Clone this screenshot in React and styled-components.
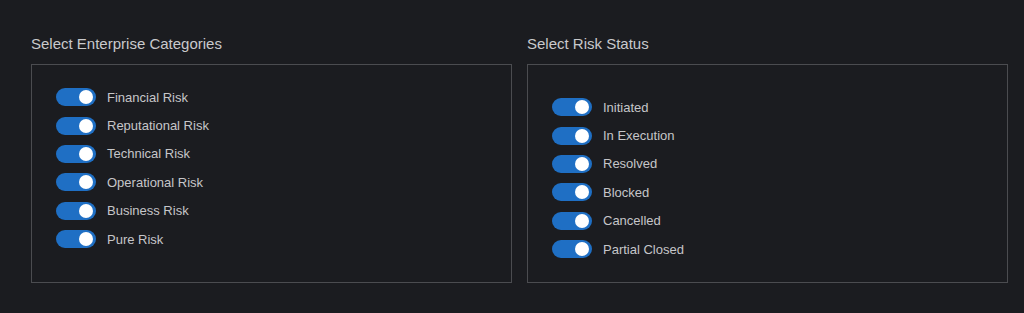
import { useState } from "react";
import styled, { createGlobalStyle } from "styled-components";

const GlobalStyle = createGlobalStyle`
  html, body {
    margin: 0;
    padding: 0;
    background: #1b1c20;
  }
  body {
    font-family: "Liberation Sans", Arial, sans-serif;
  }
`;

const Page = styled.div`
  display: grid;
  grid-template-columns: 481px 481px;
  column-gap: 15px;
  padding: 35px 0 0 31px;
  height: 313px;
  box-sizing: border-box;
`;

const Section = styled.section`
  display: flex;
  flex-direction: column;
`;

const Title = styled.h3`
  margin: 0 0 11px 0;
  font-size: 15px;
  font-weight: 400;
  line-height: 18px;
  color: #c9c9cc;
`;

const Box = styled.div`
  height: 219px;
  box-sizing: border-box;
  border: 1px solid #4b4c50;
  padding: ${({ $top }) => $top}px 0 0 24px;
  display: flex;
  flex-direction: column;
`;

const Row = styled.label`
  display: flex;
  align-items: center;
  gap: 11px;
  height: 28.4px;
  font-size: 13px;
  color: #c6c6c9;
  cursor: pointer;
`;

const Track = styled.span`
  position: relative;
  width: 40px;
  height: 18px;
  border-radius: 9px;
  background: ${({ $on }) => ($on ? "#1f6fc4" : "#55575c")};
  flex-shrink: 0;
  transition: background 0.2s linear;
`;

const Knob = styled.span`
  position: absolute;
  top: 2px;
  left: ${({ $on }) => ($on ? "23px" : "2px")};
  width: 14px;
  height: 14px;
  border-radius: 50%;
  background: #ffffff;
  transition: left 0.2s linear;
`;

const Toggle = ({ label }) => {
  const [on, setOn] = useState(true);
  return (
    <Row onClick={() => setOn(!on)}>
      <Track $on={on}>
        <Knob $on={on} />
      </Track>
      {label}
    </Row>
  );
};

const categories = [
  "Financial Risk",
  "Reputational Risk",
  "Technical Risk",
  "Operational Risk",
  "Business Risk",
  "Pure Risk",
];

const statuses = [
  "Initiated",
  "In Execution",
  "Resolved",
  "Blocked",
  "Cancelled",
  "Partial Closed",
];

const App = () => (
  <>
    <GlobalStyle />
    <Page>
      <Section>
        <Title>Select Enterprise Categories</Title>
        <Box $top={18}>
          {categories.map((c) => <Toggle key={c} label={c} />)}
        </Box>
      </Section>
      <Section>
        <Title>Select Risk Status</Title>
        <Box $top={28}>
          {statuses.map((s) => <Toggle key={s} label={s} />)}
        </Box>
      </Section>
    </Page>
  </>
);

export default App;
